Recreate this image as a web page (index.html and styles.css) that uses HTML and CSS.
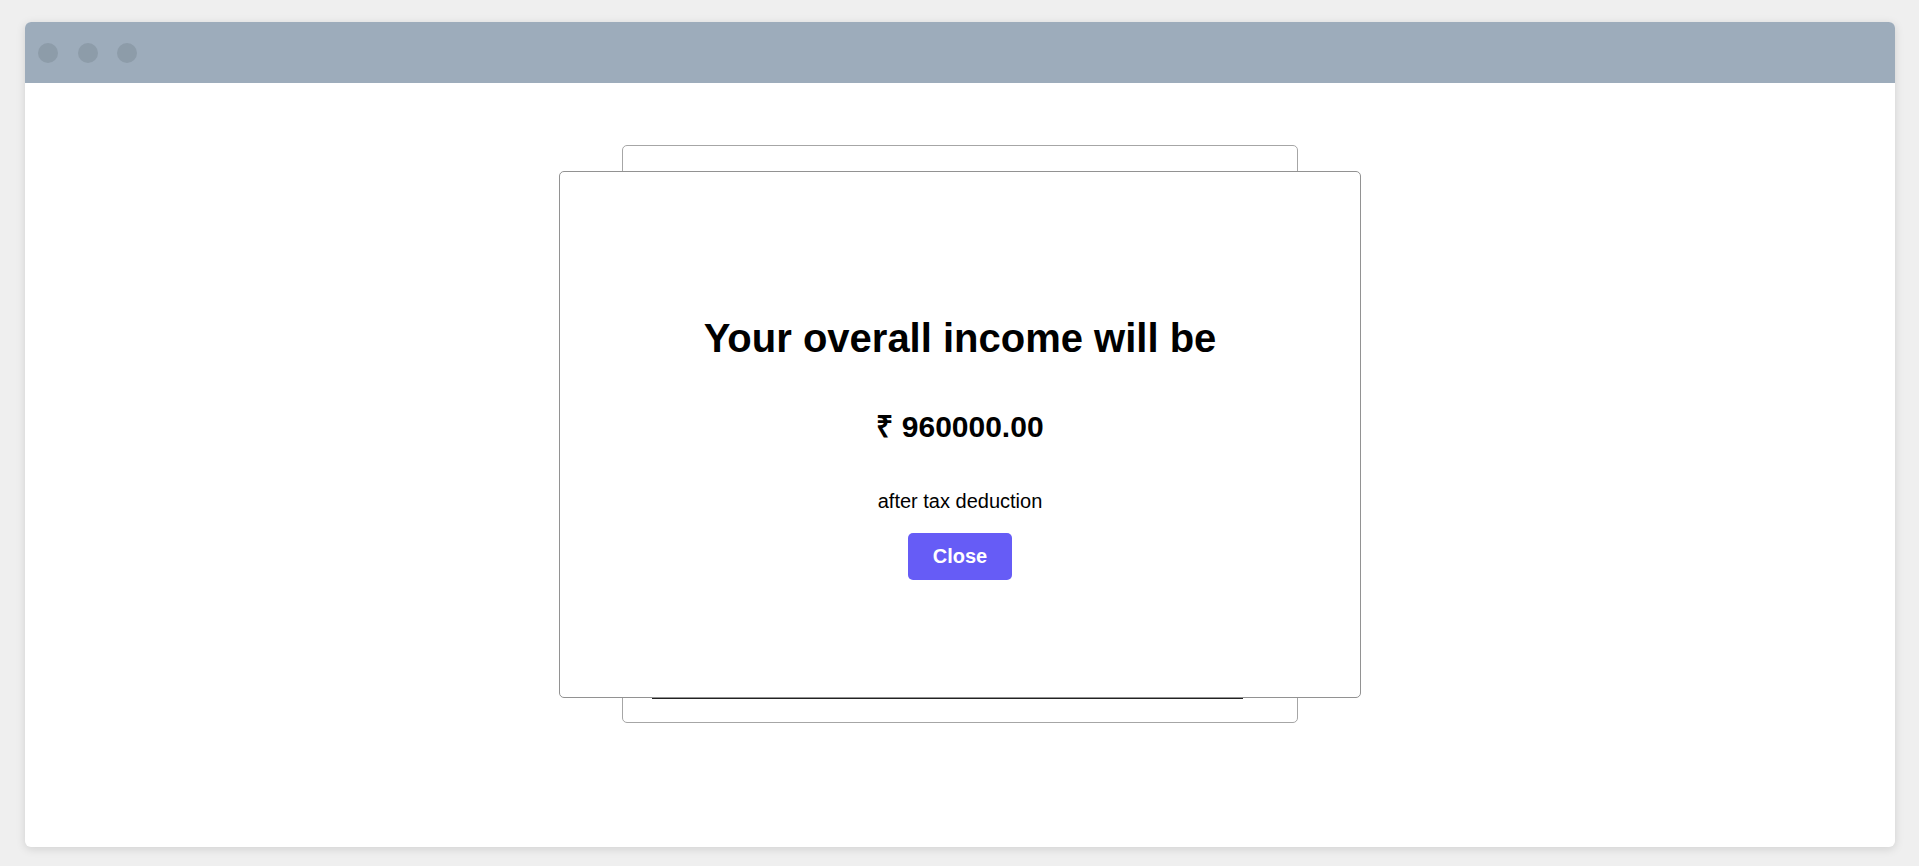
FILE: index.html
```html
<!DOCTYPE html>
<html lang="en">
<head>
<meta charset="utf-8">
<title>Income</title>
<link rel="stylesheet" href="styles.css">
</head>
<body>
  <div class="frame">
    <div class="titlebar">
      <span class="dot"></span>
      <span class="dot"></span>
      <span class="dot"></span>
    </div>
    <div class="viewport">
      <div class="back-card">
        <div class="back-line"></div>
      </div>
      <div class="modal">
        <h1 class="modal-title">Your overall income will be</h1>
        <h2 class="modal-amount">₹ 960000.00</h2>
        <p class="modal-note">after tax deduction</p>
        <button class="modal-close">Close</button>
      </div>
    </div>
  </div>
</body>
</html>
```

FILE: styles.css
```css
* { box-sizing: border-box; }

html, body {
  margin: 0;
  height: 100%;
}

body {
  background: #efefef;
  padding: 22px 24px 19px 25px;
  font-family: "Liberation Sans", Arial, sans-serif;
}

.frame {
  width: 1870px;
  height: 825px;
  background: #ffffff;
  border-radius: 6px;
  box-shadow: 0 2px 10px rgba(0, 0, 0, 0.13);
  overflow: hidden;
  display: flex;
  flex-direction: column;
}

.titlebar {
  height: 61px;
  flex: none;
  background: #9dacbb;
  display: flex;
  align-items: center;
  gap: 19.5px;
  padding-left: 13px;
}

.dot {
  width: 20px;
  height: 20px;
  border-radius: 50%;
  background: #8d9ca9;
}

.viewport {
  flex: 1;
  position: relative;
  display: flex;
  justify-content: center;
  align-items: flex-start;
  padding-top: 62px;
}

.back-card {
  width: 676px;
  height: 578px;
  border: 1px solid #a6a6a6;
  border-radius: 5px;
  position: relative;
  padding: 551px 0 0 29px;
}

.back-line {
  width: 591px;
  height: 2px;
  background: #222;
}

.modal {
  position: absolute;
  top: 88px;
  left: 0;
  right: 0;
  margin: 0 auto;
  width: 802px;
  height: 527px;
  background: #ffffff;
  border: 1px solid #929292;
  border-radius: 5px;
  display: flex;
  flex-direction: column;
  align-items: center;
  padding-top: 142px;
  color: #000;
}

.modal-title {
  margin: 0;
  font-size: 40px;
  line-height: 48px;
  font-weight: 700;
}

.modal-amount {
  margin: 48px 0 0;
  font-size: 30px;
  line-height: 34px;
  font-weight: 700;
}

.modal-note {
  margin: 45px 0 0;
  font-size: 20px;
  line-height: 24px;
}

.modal-close {
  margin-top: 20px;
  font-family: inherit;
  font-size: 20px;
  line-height: 23px;
  font-weight: 700;
  color: #ffffff;
  background: #665cf6;
  border: none;
  border-radius: 5px;
  padding: 12px 25px;
}
```
